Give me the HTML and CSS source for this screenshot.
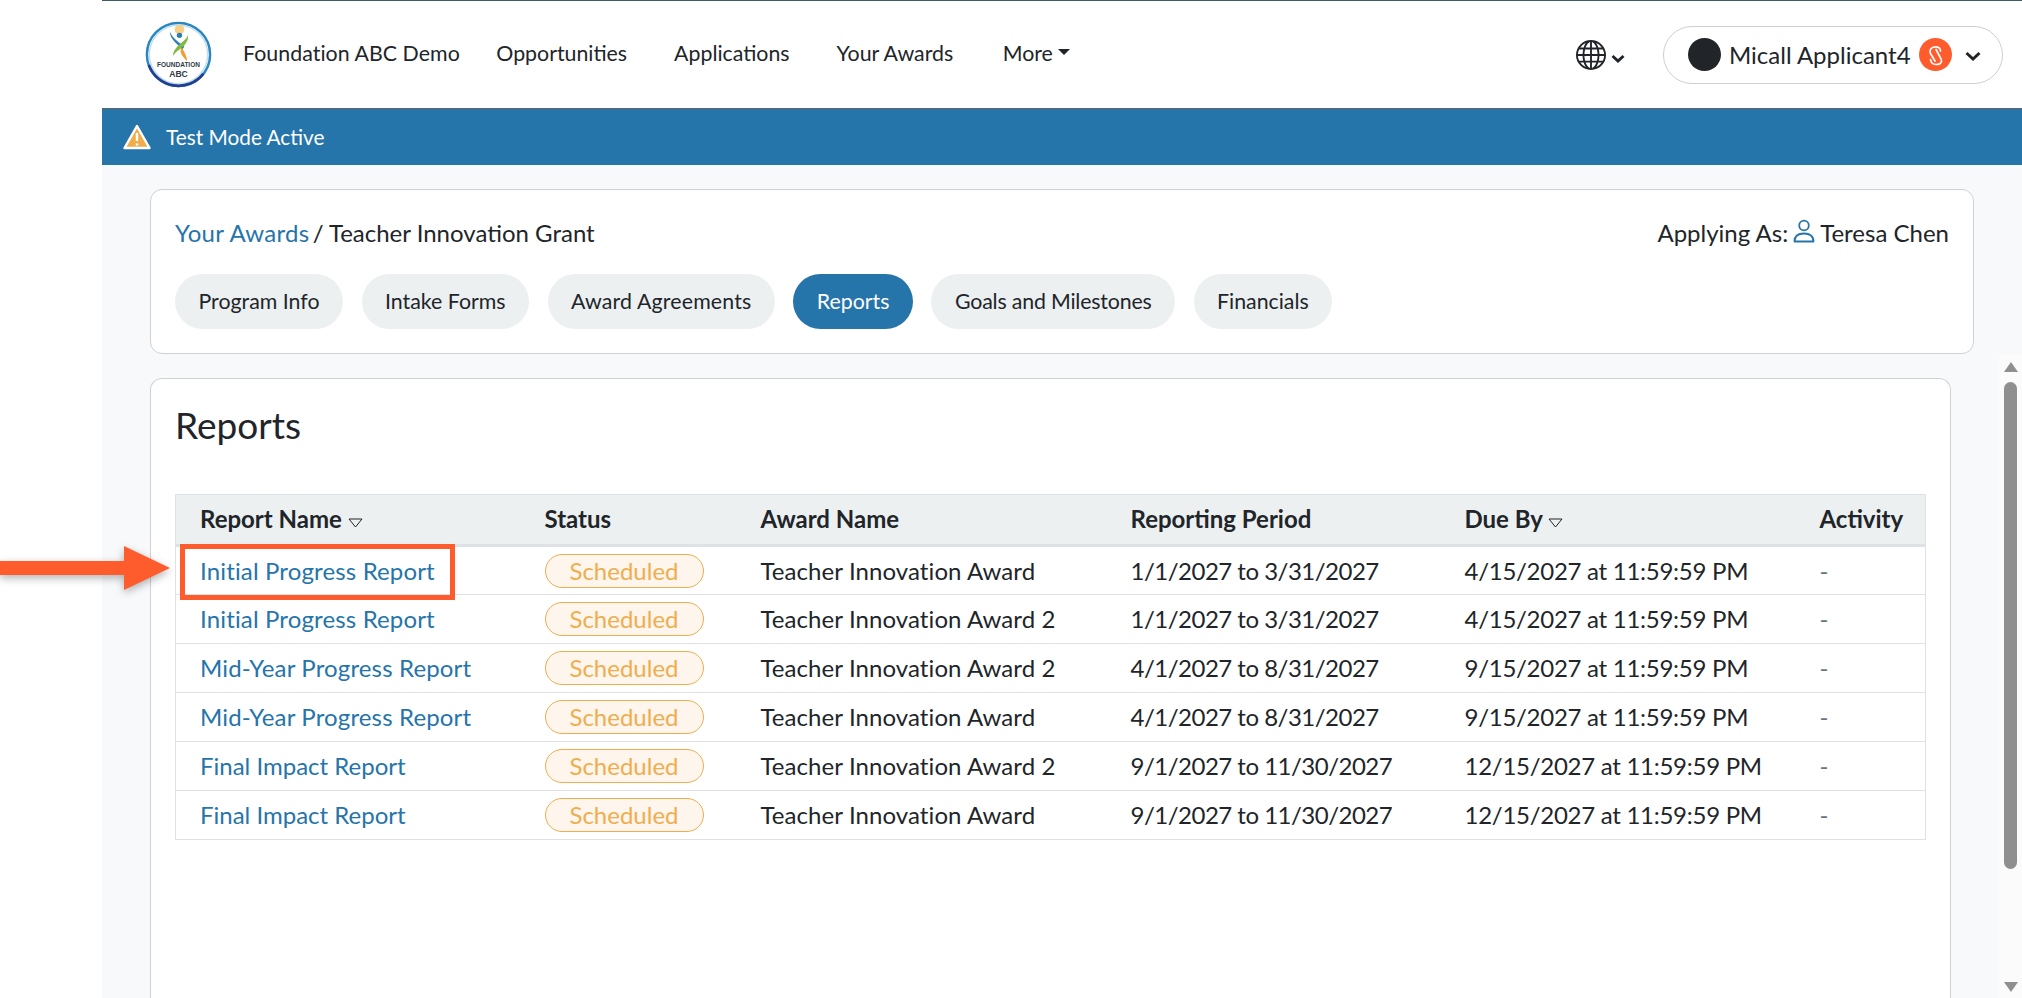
FILE: index.html
```html
<!DOCTYPE html>
<html lang="en">
<head>
<meta charset="utf-8">
<title>Reports</title>
<link rel="stylesheet" href="styles.css">
</head>
<body>
<div class="strip"></div>
<div class="app">
  <header class="nav">
    <svg class="logo" viewBox="0 0 70 70" aria-hidden="true">
      <circle cx="35" cy="35" r="33" fill="#fff" stroke="#2a86c2" stroke-width="2.600"/>
      <circle cx="35" cy="35" r="30.500" fill="none" stroke="#bfdff0" stroke-width="1.500"/>
      <path d="M4 46A33 33 0 0 0 61 55" fill="none" stroke="#243f92" stroke-width="2.800"/>
      <circle cx="36" cy="9" r="5" fill="#f8cf86"/>
      <circle cx="36" cy="15" r="2.800" fill="#2a7dbb"/>
      <path d="M26 11C26 19 33 23 39 30L41 27C36 22 29 19 26 11Z" fill="#2a7dbb"/>
      <path d="M45 14C43 22 30 25 29 37C33 29 46 27 45 14Z" fill="#7dbb42"/>
      <path d="M37 30C37 35 41 39 44 42C44 37 41 33 39 28Z" fill="#f0a030"/>
      <text class="logo-t" x="35" y="48">FOUNDATION</text>
      <text class="logo-b" x="35" y="58">ABC</text>
    </svg>
    <a class="nav-link brand" href="#">Foundation ABC Demo</a>
    <a class="nav-link opp" href="#">Opportunities</a>
    <a class="nav-link app-l" href="#">Applications</a>
    <a class="nav-link aw" href="#">Your Awards</a>
    <a class="nav-link more" href="#">More<span class="caret"></span></a>
    <div class="nav-right">
      <svg class="globe" viewBox="0 0 16 16" aria-hidden="true"><path fill="#212529" d="M0 8a8 8 0 1 1 16 0A8 8 0 0 1 0 8zm7.500-6.923c-.67.204-1.335.82-1.887 1.855A7.97 7.97 0 0 0 5.145 4H7.500V1.077zM4.090 4a9.267 9.267 0 0 1 .64-1.539 6.700 6.700 0 0 1 .597-.933A7.025 7.025 0 0 0 2.255 4H4.090zm-.582 3.500c.03-.877.138-1.718.312-2.500H1.674a6.958 6.958 0 0 0-.656 2.500h2.490zM4.847 5a12.500 12.500 0 0 0-.338 2.500H7.500V5H4.847zM8.500 5v2.500h2.990a12.495 12.495 0 0 0-.337-2.500H8.500zM4.510 8.500a12.500 12.500 0 0 0 .337 2.500H7.500V8.500H4.510zm3.990 0V11h2.653c.187-.765.306-1.608.338-2.500H8.500zM5.145 12c.138.386.295.744.468 1.068.552 1.035 1.218 1.650 1.887 1.855V12H5.145zm.182 2.472a6.696 6.696 0 0 1-.597-.933A9.268 9.268 0 0 1 4.090 12H2.255a7.024 7.024 0 0 0 3.072 2.472zM3.820 11a13.652 13.652 0 0 1-.312-2.500h-2.490c.062.890.291 1.733.656 2.500H3.820zm6.853 3.472A7.024 7.024 0 0 0 13.745 12H11.910a9.270 9.270 0 0 1-.64 1.539 6.688 6.688 0 0 1-.597.933zM8.500 12v2.923c.67-.204 1.335-.82 1.887-1.855.173-.324.33-.682.468-1.068H8.500zm3.680-1h2.146c.365-.767.594-1.610.656-2.500h-2.490a13.650 13.650 0 0 1-.312 2.500zm2.802-3.500a6.959 6.959 0 0 0-.656-2.500H12.180c.174.782.282 1.623.312 2.500h2.490zM11.270 2.461c.247.464.462.98.64 1.539h1.835a7.024 7.024 0 0 0-3.072-2.472c.218.284.418.598.597.933zM10.855 4a7.966 7.966 0 0 0-.468-1.068C9.835 1.897 9.170 1.282 8.500 1.077V4h2.355z"/></svg>
      <svg class="chev chev-s" viewBox="0 0 14 10" aria-hidden="true"><path d="M1.500 2l5.500 5 5.500-5" fill="none" stroke="#212529" stroke-width="3"/></svg>
      <div class="user">
        <span class="avatar"></span>
        <span class="uname">Micall Applicant4</span>
        <svg class="badge" viewBox="0 0 33 33" aria-hidden="true">
          <circle cx="16.500" cy="16.500" r="16.500" fill="#ff5c2d"/>
          <path d="M21.500 13C21.500 10 19 8.800 16.500 8.800C13.500 8.800 11 10.800 11 13.500C11 15 12 16.500 13 18L16 23M17 11.500L21 19C22 20.500 23 22 22.500 23.500C22 25.500 19.500 26.500 17 26.500C14.500 26.500 12 25 11.500 21.500" fill="none" stroke="#fff" stroke-width="1.700" stroke-linecap="round"/>
        </svg>
        <svg class="chev chev-l" viewBox="0 0 16 11" aria-hidden="true"><path d="M1.500 2l6.500 6 6.500-6" fill="none" stroke="#212529" stroke-width="3"/></svg>
      </div>
    </div>
  </header>
  <div class="test-bar">
    <svg class="warn" viewBox="0 0 28 26" aria-hidden="true">
      <path d="M14 2L26.500 24H1.500Z" fill="#f0ad4e" stroke="#fff" stroke-width="2.400" stroke-linejoin="round"/>
      <path d="M14 9v8M14 19.500v2" stroke="#fff" stroke-width="2.400" fill="none"/>
    </svg>
    <span>Test Mode Active</span>
  </div>
  <main class="content">
    <section class="card head-card">
      <div class="crumb-row">
        <div><a class="link crumb-link" href="#">Your Awards</a> / Teacher Innovation Grant</div>
        <div class="applying">Applying As:
          <svg class="person" viewBox="0 0 22 24" aria-hidden="true">
            <circle cx="11" cy="6.500" r="4.800" fill="none" stroke="#2574aa" stroke-width="1.800"/>
            <path d="M1.500 22.500c0-5.500 3.500-8 9.500-8s9.500 2.500 9.500 8z" fill="none" stroke="#2574aa" stroke-width="1.800" stroke-linejoin="round"/>
          </svg>
          Teresa Chen</div>
      </div>
      <nav class="pills">
        <a class="pill" href="#">Program Info</a>
        <a class="pill" href="#">Intake Forms</a>
        <a class="pill pill-award" href="#">Award Agreements</a>
        <a class="pill active" href="#">Reports</a>
        <a class="pill pill-goals" href="#">Goals and Milestones</a>
        <a class="pill" href="#">Financials</a>
      </nav>
    </section>
    <div class="lower">
      <section class="card reports-card">
        <h2 class="title">Reports</h2>
        <table class="table">
          <colgroup>
            <col class="c1"><col class="c2"><col class="c3"><col class="c4"><col class="c5"><col class="c6">
          </colgroup>
          <thead>
            <tr>
              <th>Report Name <svg class="sort" viewBox="0 0 15 10" aria-hidden="true"><path d="M1 1h13L7.500 9z" fill="none" stroke="#212529" stroke-width="1"/></svg></th>
              <th>Status</th>
              <th>Award Name</th>
              <th>Reporting Period</th>
              <th>Due By <svg class="sort" viewBox="0 0 15 10" aria-hidden="true"><path d="M1 1h13L7.500 9z" fill="none" stroke="#212529" stroke-width="1"/></svg></th>
              <th>Activity</th>
            </tr>
          </thead>
          <tbody>
            <tr><td><a class="link" href="#">Initial Progress Report</a></td><td><span class="status">Scheduled</span></td><td class="award">Teacher Innovation Award</td><td class="period">1/1/2027 to 3/31/2027</td><td class="due">4/15/2027 at 11:59:59 PM</td><td class="dash">-</td></tr>
            <tr><td><a class="link" href="#">Initial Progress Report</a></td><td><span class="status">Scheduled</span></td><td class="award">Teacher Innovation Award 2</td><td class="period">1/1/2027 to 3/31/2027</td><td class="due">4/15/2027 at 11:59:59 PM</td><td class="dash">-</td></tr>
            <tr><td><a class="link" href="#">Mid-Year Progress Report</a></td><td><span class="status">Scheduled</span></td><td class="award">Teacher Innovation Award 2</td><td class="period">4/1/2027 to 8/31/2027</td><td class="due">9/15/2027 at 11:59:59 PM</td><td class="dash">-</td></tr>
            <tr><td><a class="link" href="#">Mid-Year Progress Report</a></td><td><span class="status">Scheduled</span></td><td class="award">Teacher Innovation Award</td><td class="period">4/1/2027 to 8/31/2027</td><td class="due">9/15/2027 at 11:59:59 PM</td><td class="dash">-</td></tr>
            <tr><td><a class="link link-final" href="#">Final Impact Report</a></td><td><span class="status">Scheduled</span></td><td class="award">Teacher Innovation Award 2</td><td class="period">9/1/2027 to 11/30/2027</td><td class="due">12/15/2027 at 11:59:59 PM</td><td class="dash">-</td></tr>
            <tr><td><a class="link link-final" href="#">Final Impact Report</a></td><td><span class="status">Scheduled</span></td><td class="award">Teacher Innovation Award</td><td class="period">9/1/2027 to 11/30/2027</td><td class="due">12/15/2027 at 11:59:59 PM</td><td class="dash">-</td></tr>
          </tbody>
        </table>
      </section>
      <div class="scrollbar">
        <span class="sb-up"></span>
        <span class="sb-thumb"></span>
        <span class="sb-down"></span>
      </div>
    </div>
  </main>
</div>
<div class="callout-box"></div>
<svg class="callout-arrow" viewBox="0 0 180 56" aria-hidden="true">
  <path d="M0 15H124V0L170 22 124 44V29H0Z" fill="#ff5c2d"/>
</svg>
</body>
</html>
```
FILE: styles.css
```css
* { box-sizing: border-box; }
html, body { margin: 0; height: 100%; overflow: hidden; }
body {
  display: flex;
  background: #fff;
  color: #212529;
  font-family: Lato, "Liberation Sans", sans-serif;
  font-size: 21.33px;
  line-height: 1.5;
}
a { text-decoration: none; color: inherit; }
.strip { width: 102px; flex: none; }
.app { flex: 1; min-width: 0; display: flex; flex-direction: column; height: 998px; background: #f8f9fa; }

.nav {
  height: 109px;
  flex: none;
  display: flex;
  align-items: center;
  background: #fff;
  border-top: 1px solid #3d5a66;
  border-bottom: 1px solid #666;
  padding-left: 43px;
  padding-right: 19px;
}
.logo { width: 67px; height: 67px; flex: none; }
.logo-t { font: 700 6.800px "Liberation Sans", sans-serif; text-anchor: middle; fill: #2f3b45; }
.logo-b { font: 700 9px "Liberation Sans", sans-serif; text-anchor: middle; fill: #2f3b45; }
.nav-link { white-space: nowrap; margin-bottom: 2px; }
.brand { margin-left: 31px; letter-spacing: .05px; }
.opp { margin-left: 36.500px; }
.app-l { margin-left: 47px; }
.aw { margin-left: 47px; }
.more { margin-left: 49.500px; display: inline-flex; align-items: center; }
.caret {
  margin-left: 5px;
  border-left: 6px solid transparent;
  border-right: 6px solid transparent;
  border-top: 6px solid #212529;
  margin-top: -2px;
}
.nav-right { margin-left: auto; display: flex; align-items: center; }
.globe { width: 30px; height: 30px; margin-left: 1px; }
.chev { flex: none; }
.chev-s { width: 14px; height: 10px; margin-left: 5px; margin-top: 8px; }
.user {
  margin-left: 38px;
  width: 340px;
  height: 58px;
  display: flex;
  align-items: center;
  border: 1px solid #cfcfcf;
  border-radius: 29px;
  padding-left: 24px;
}
.avatar { width: 33px; height: 33px; border-radius: 50%; background: #212529; flex: none; }
.uname { margin-left: 8px; font-size: 24px; white-space: nowrap; }
.badge { width: 33px; height: 33px; margin-left: 8px; flex: none; }
.chev-l { width: 16px; height: 11px; margin-left: 13px; margin-top: 3px; }

.test-bar {
  height: 56px;
  flex: none;
  display: flex;
  align-items: center;
  background: #2574aa;
  color: #fff;
  font-size: 20.800px;
  padding-left: 21px;
}
.warn { width: 28px; height: 26px; margin-right: 15px; }

.content { flex: 1; min-height: 0; display: flex; flex-direction: column; padding: 24px 48px 0; gap: 24px; }
.card { background: #fff; border: 1px solid #cfd2d4; border-radius: 12px; }
.head-card { height: 165px; flex: none; padding: 25px 24px; }
.crumb-row { display: flex; justify-content: space-between; align-items: center; height: 36px; font-size: 24px; }
.link { color: #2574aa; }
.crumb-link { letter-spacing: .3px; margin-right: -3px; }
.applying { display: flex; align-items: center; gap: 5px; }
.person { width: 22px; height: 24px; margin-top: -4px; }
.pills { display: flex; gap: 18.500px; margin-top: 23px; }
.pill {
  height: 55px;
  display: flex;
  align-items: center;
  padding: 0 23.500px;
  border-radius: 28px;
  background: #ecf0f1;
}
.pill-award { letter-spacing: .15px; }
.pill-goals { letter-spacing: -.18px; }
.pill.active { background: #2574aa; color: #fff; }

.lower { flex: 1; min-height: 0; display: flex; margin-right: -48px; }
.reports-card { flex: 1; min-width: 0; border-radius: 12px 12px 0 0; border-bottom: 0; padding: 0 24px; }
.title { margin: 24px 0 47px; font-size: 37px; font-weight: 400; line-height: 44px; }
.scrollbar {
  width: 23px;
  margin-left: 48px;
  margin-top: -24px;
  background: #fbfbfb;
  display: flex;
  flex-direction: column;
  align-items: center;
  padding-top: 8px;
  padding-bottom: 6px;
  flex: none;
}
.sb-up { width: 0; height: 0; border-left: 7px solid transparent; border-right: 7px solid transparent; border-bottom: 10px solid #8f8f8f; }
.sb-thumb { width: 13px; height: 487px; margin-top: 10px; border-radius: 7px; background: #8f8f8f; }
.sb-down { width: 0; height: 0; margin-top: auto; border-left: 7px solid transparent; border-right: 7px solid transparent; border-top: 10px solid #8f8f8f; }

.table { width: 1750px; table-layout: fixed; border-collapse: collapse; border: 1px solid #dee2e6; background: #fff; }
.c1 { width: 345px; }
.c2 { width: 216px; }
.c3 { width: 370px; }
.c4 { width: 334px; }
.c5 { width: 355px; }
.c6 { width: 130px; }
.table th {
  height: 51px;
  padding: 0 24px 2px;
  text-align: left;
  font-size: 24px;
  font-weight: 700;
  background: #ecf0f1;
  border-bottom: 3px solid #dee2e6;
  white-space: nowrap;
}
.table td {
  height: 49px;
  padding: 0 24px;
  border-top: 1px solid #dee2e6;
  white-space: nowrap;
  font-size: 24px;
}
.table td .link { letter-spacing: .15px; }
.table td .link-final { letter-spacing: 0; }
.table td.award { letter-spacing: .08px; }
.table td.period { letter-spacing: -.5px; }
.table td.due { letter-spacing: -.27px; }
.sort { width: 15px; height: 10px; margin-left: 0; }
.status {
  display: inline-flex;
  align-items: center;
  justify-content: center;
  width: 159px;
  height: 34px;
  border: 1px solid #f0ad4e;
  border-radius: 17px;
  background: #fef5ec;
  color: #f0ad4e;
  font-size: 24px;
}
.dash { color: #6c757d; }

.callout-box { position: absolute; left: 180px; top: 544px; width: 275px; height: 56px; border: 5px solid #ff5c2d; }
.callout-arrow { position: absolute; left: 0; top: 546px; width: 180px; height: 56px; filter: drop-shadow(0 3px 4px rgba(0,0,0,.3)); }
```
